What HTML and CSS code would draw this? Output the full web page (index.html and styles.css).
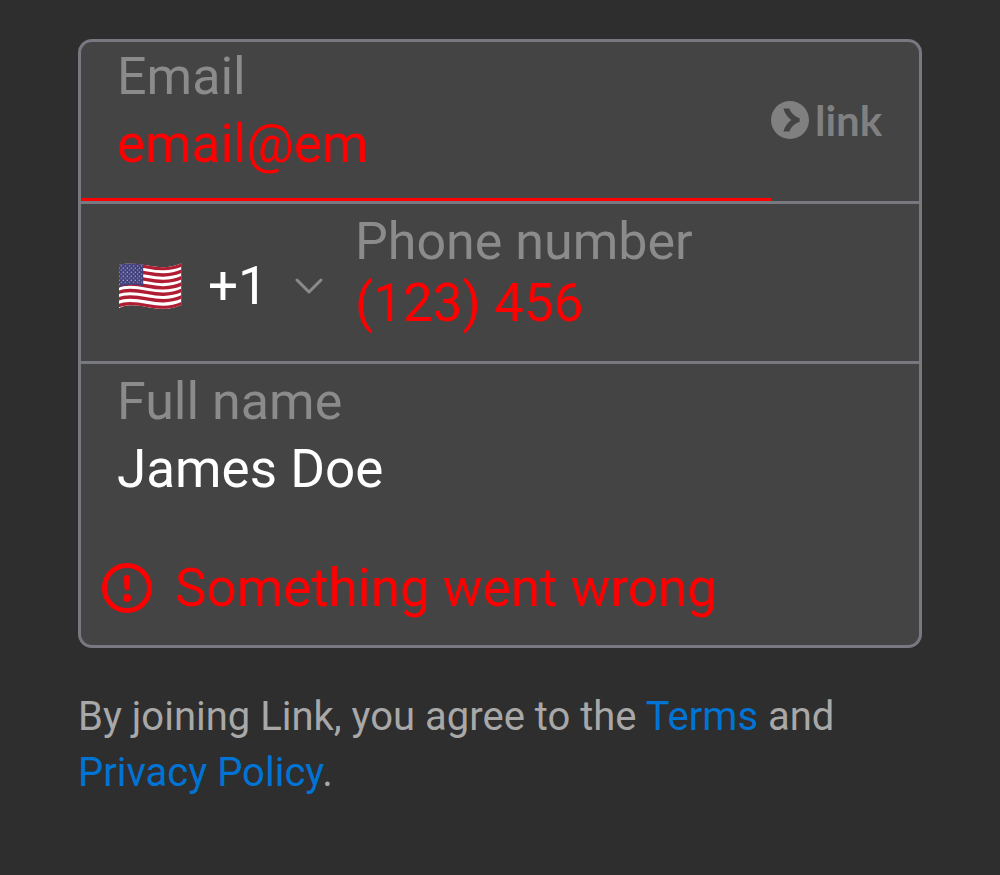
FILE: index.html
```
<!DOCTYPE html>
<html lang="en">
<head>
<meta charset="utf-8">
<meta name="viewport" content="width=device-width, initial-scale=1">
<title>Link sign up</title>
<link rel="stylesheet" href="styles.css">
</head>
<body>
<main class="page">
  <form class="card">
    <div class="row row-email">
      <div class="field field-email">
        <label class="label" for="email">Email</label>
        <input class="input invalid" id="email" type="text" inputmode="email" value="email@em">
      </div>
      <div class="brand">
        <svg class="brand-mark" viewBox="0 0 38 38" aria-hidden="true">
          <circle cx="19" cy="19" r="19"/>
          <path class="brand-arrow" d="M12.400 7.500H18.500C19.800 12 23.500 15.200 28.700 17.300V20.700C23.500 22.800 19.800 26 18.500 30.500H12.400C13.700 25.500 16.500 21.800 20.300 19C16.500 16.200 13.700 12.500 12.400 7.500Z"/>
        </svg>
        <span class="brand-name">link</span>
      </div>
    </div>
    <div class="row row-phone">
      <div class="country">
        <svg class="flag" viewBox="0 0 188 136" aria-hidden="true">
          <defs>
            <clipPath id="flag-shape"><path d="M2 6C20-2 55 1 85 7S150 18 187 1V124C150 141 115 136 85 130S20 121 2 134Z"/></clipPath>
            <path id="stripe" d="M-2 13C20 3 55 6 85 12S150 23 190 5"/>
            <pattern id="stars" width="12" height="12" patternUnits="userSpaceOnUse"><circle cx="3" cy="3" r="2"/><circle cx="9" cy="9" r="2"/></pattern>
          </defs>
          <g clip-path="url(#flag-shape)">
            <rect class="flag-white" width="188" height="136"/>
            <g class="flag-stripes">
              <use href="#stripe" y="-1"/>
              <use href="#stripe" y="18"/>
              <use href="#stripe" y="37"/>
              <use href="#stripe" y="56"/>
              <use href="#stripe" y="75"/>
              <use href="#stripe" y="94"/>
              <use href="#stripe" y="114"/>
            </g>
            <path class="flag-canton" d="M0 0H74V68C50 63 22 62 0 73Z"/>
            <path fill="url(#stars)" d="M3 5H71V63C50 59 22 58 3 66Z"/>
          </g>
        </svg>
        <select class="code" aria-label="Country code">
          <option>+1</option>
        </select>
        <svg class="chevron" viewBox="0 0 28 18" aria-hidden="true"><path d="M2 3L14 15L26 3"/></svg>
      </div>
      <div class="field">
        <label class="label" for="phone">Phone number</label>
        <input class="input input-phone invalid" id="phone" type="tel" value="(123) 456">
      </div>
    </div>
    <div class="row row-name">
      <div class="field">
        <label class="label" for="name">Full name</label>
        <input class="input" id="name" type="text" value="James Doe">
      </div>
    </div>
    <div class="error" role="alert">
      <svg class="error-icon" viewBox="0 0 50 50" aria-hidden="true">
        <circle class="error-ring" cx="25" cy="25" r="22.500"/>
        <path d="M22 15Q22 12 25 12T28 15L27.500 25Q27 27.500 25 27.500T22.500 25Z"/>
        <circle cx="25" cy="35" r="4"/>
      </svg>
      <p class="error-text">Something went wrong</p>
    </div>
  </form>
  <p class="terms">By joining Link, you agree to the <a href="#terms">Terms</a> and <a href="#privacy">Privacy Policy</a>.</p>
</main>
</body>
</html>
```
FILE: styles.css
```
* {
  box-sizing: border-box;
}

body {
  margin: 0;
  background: #2e2e2e;
  color: #fff;
  font-family: Roboto, sans-serif;
  font-size: 53px;
  line-height: 64px;
}

.page {
  padding: 39px 78px;
}

.card {
  border: 3px solid #787880;
  border-radius: 14px;
  background: #444;
  overflow: hidden;
}

.row {
  display: flex;
}

.row-email,
.row-phone {
  border-bottom: 3px solid #787880;
}

.row-email {
  padding-right: 36px;
}

.row-phone,
.row-name {
  padding: 6px 36px 0;
}

.field {
  display: flex;
  flex: 1;
  flex-direction: column;
  min-width: 0;
}

.field-email {
  padding: 3px 0 22px 36px;
  border-bottom: 3px solid #f00;
}

.label {
  color: #8b8b8b;
  font-size: 52px;
}

.input {
  width: 100%;
  height: 64px;
  margin: 3px 0 0;
  padding: 0;
  border: 0;
  outline: 0;
  background: transparent;
  color: #fff;
  font: inherit;
}

.input-phone {
  margin: -3px 0 26px;
}

.invalid,
.error {
  color: #f00;
}

.brand {
  display: flex;
  align-items: center;
  gap: 6px;
  width: 112px;
  padding-bottom: 4px;
  color: #808080;
}

.brand-mark {
  flex: none;
  width: 38px;
  height: 38px;
  fill: currentColor;
}

.brand-arrow {
  fill: #444;
}

.brand-name {
  font-family: Lato, sans-serif;
  font-size: 42px;
  font-weight: 700;
}

.country {
  display: flex;
  align-items: center;
  width: 238px;
  padding-left: 1px;
}

.flag {
  width: 64px;
  height: 46px;
}

.flag-white {
  fill: #fff;
}

.flag-stripes {
  fill: none;
  stroke: #b01c32;
  stroke-width: 10;
}

.flag-canton {
  fill: #41407c;
}

#stars {
  fill: #c3c3dc;
}

.code {
  margin: 0 0 0 26px;
  padding: 0;
  border: 0;
  outline: 0;
  appearance: none;
  background: transparent;
  color: #fff;
  font: inherit;
}

.chevron {
  width: 28px;
  height: 18px;
  margin-left: 27px;
  fill: none;
  stroke: #8b8b8b;
  stroke-width: 3;
  stroke-linecap: round;
  stroke-linejoin: round;
}

.error {
  display: flex;
  align-items: center;
  gap: 23px;
  padding: 55px 21px 25px;
}

.error-icon {
  flex: none;
  width: 50px;
  height: 50px;
  fill: currentColor;
}

.error-ring {
  fill: none;
  stroke: currentColor;
  stroke-width: 5;
}

.error-text {
  margin: 0;
}

.terms {
  margin: 41px 0 0;
  color: #a8a8a8;
  font-size: 40px;
  line-height: 56px;
}

.terms a {
  color: #0074d4;
  text-decoration: none;
}
```
